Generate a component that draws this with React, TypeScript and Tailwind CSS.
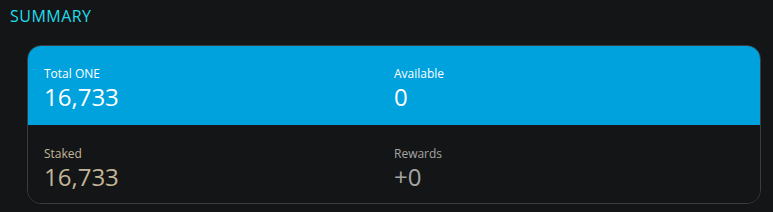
const stats = {
  total: "16,733",
  available: "0",
  staked: "16,733",
  rewards: "+0",
};

export default function App() {
  return (
    <main className="min-h-[212px] bg-[#141517] px-[10px] pt-[6px] pb-[6px] font-['Open_Sans',sans-serif]">
      <h2 className="text-[16px] font-medium leading-[20px] tracking-[0.03em] text-[#22dceb]">SUMMARY</h2>

      <section className="ml-[17px] mr-[2px] mt-[19px] overflow-hidden rounded-[14px] border border-[#3b3c3f]">
        <div className="grid grid-cols-2 bg-[#00a2de] px-4 pt-[19px] pb-[14px] text-white">
          <Stat label="Total ONE" value={stats.total} />
          <Stat label="Available" value={stats.available} />
        </div>
        <div className="grid grid-cols-2 bg-[#141517] px-4 pt-[20px] pb-[12px]">
          <Stat label="Staked" value={stats.staked} tone="text-[#c3b597]" />
          <Stat label="Rewards" value={stats.rewards} tone="text-[#a3a5a4]" />
        </div>
      </section>
    </main>
  );
}

function Stat({ label, value, tone }: { label: string; value: string; tone?: string }) {
  return (
    <div className={tone}>
      <p className="text-[12px] leading-[18px]">{label}</p>
      <p className="text-[24px] leading-[28px]">{value}</p>
    </div>
  );
}
